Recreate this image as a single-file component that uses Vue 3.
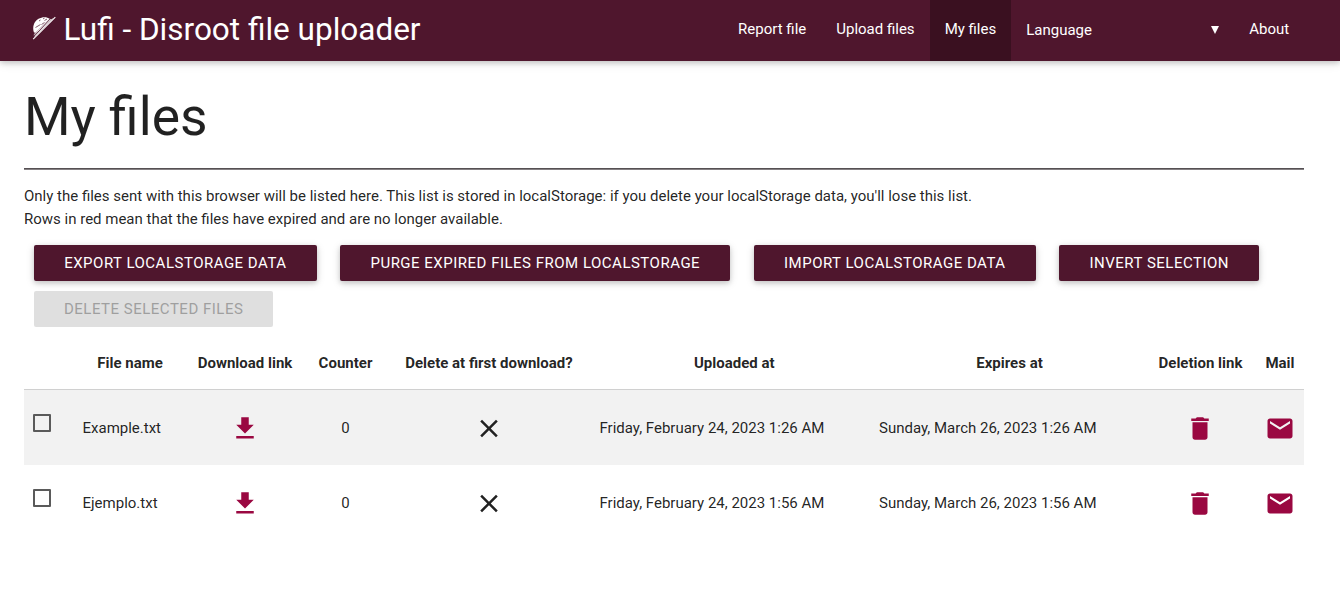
<script setup>
const links = [
  { label: 'Report file' },
  { label: 'Upload files' },
  { label: 'My files', active: true },
]
const actions = [
  'Export localStorage data',
  'Purge expired files from localStorage',
  'Import localStorage data',
  'Invert selection',
]
const files = [
  { name: 'Example.txt', counter: 0, uploaded: 'Friday, February 24, 2023 1:26 AM', expires: 'Sunday, March 26, 2023 1:26 AM' },
  { name: 'Ejemplo.txt', counter: 0, uploaded: 'Friday, February 24, 2023 1:56 AM', expires: 'Sunday, March 26, 2023 1:56 AM' },
]
</script>

<template>
  <div class="page">
    <nav class="bar">
      <a class="brand">
        <svg class="logo" width="24" height="24" viewBox="0 0 24 24">
          <path d="M2 16.500C.2 12 1.500 5.500 6.500 2.800C10.500.6 15 .8 17.800 2.800L3.500 16.800Z" fill="#fff" />
          <path d="M3.500 11.500l5-3M9.500 8.500l3-2M7 5l1.500-1M12.500 4.500l2.500-1.500M11 2.800l1.500-.5" stroke="#4f162d" stroke-width=".7" />
          <path d="M1.800 18.800L18.800 3.200" stroke="#fff" stroke-width=".9" />
          <path d="M1.200 23.200L23.300 1.200" stroke="#fff" stroke-width="1.100" />
          <path d="M2.500 20.200L20.500 2.800" stroke="#fff" stroke-width=".9" />
        </svg>
        <span>Lufi - Disroot file uploader</span>
      </a>
      <div class="menu">
        <a v-for="l in links" :key="l.label" class="item" :class="{ active: l.active }">{{ l.label }}</a>
        <div class="item language"><span>Language</span><svg width="8" height="8" viewBox="0 0 8 8"><path d="M0 0h8L4 8z" fill="#fff" /></svg></div>
        <a class="item">About</a>
      </div>
    </nav>
    <main>
      <h1>My files</h1>
      <hr>
      <p>Only the files sent with this browser will be listed here. This list is stored in localStorage: if you delete your localStorage data, you'll lose this list.<br>Rows in red mean that the files have expired and are no longer available.</p>
      <div class="actions">
        <button v-for="a in actions" :key="a" class="btn">{{ a }}</button>
        <button class="btn disabled" disabled>Delete selected files</button>
      </div>
      <table>
        <colgroup>
          <col class="c-check"><col class="c-name"><col class="c-down"><col class="c-count"><col class="c-first"><col class="c-up"><col class="c-exp"><col class="c-del"><col class="c-mail">
        </colgroup>
        <thead>
          <tr>
            <th></th><th>File name</th><th>Download link</th><th>Counter</th><th>Delete at first download?</th><th>Uploaded at</th><th>Expires at</th><th>Deletion link</th><th>Mail</th>
          </tr>
        </thead>
        <tbody>
          <tr v-for="f in files" :key="f.name">
            <td class="check"><span class="box"></span></td>
            <td>{{ f.name }}</td>
            <td class="center"><svg class="icon" viewBox="0 0 24 24"><path d="M19 9h-4V3H9v6H5l7 7 7-7zM5 18v2h14v-2H5z" /></svg></td>
            <td class="center">{{ f.counter }}</td>
            <td class="center"><svg class="icon dark" viewBox="0 0 24 24"><path d="M19 6.410L17.590 5 12 10.590 6.410 5 5 6.410 10.590 12 5 17.590 6.410 19 12 13.410 17.590 19 19 17.590 13.410 12z" /></svg></td>
            <td>{{ f.uploaded }}</td>
            <td>{{ f.expires }}</td>
            <td class="center trash"><svg class="icon" viewBox="0 0 24 24"><path d="M6 19c0 1.100.9 2 2 2h8c1.100 0 2-.9 2-2V7H6v12zM19 4h-3.500l-1-1h-5l-1 1H5v2h14V4z" /></svg></td>
            <td class="center"><svg class="icon" viewBox="0 0 24 24"><path d="M20 4H4c-1.100 0-1.990.9-1.990 2L2 18c0 1.100.9 2 2 2h16c1.100 0 2-.9 2-2V6c0-1.100-.9-2-2-2zm0 4l-8 5-8-5V6l8 5 8-5v2z" /></svg></td>
          </tr>
        </tbody>
      </table>
    </main>
  </div>
</template>

<style>
body { background: #fff; }
</style>

<style scoped>
.page {
  height: 600px;
  overflow: hidden;
  background: #fff;
  color: rgba(0, 0, 0, 0.87);
  font: 15px/22.5px Roboto, sans-serif;
}
.bar {
  display: flex;
  justify-content: space-between;
  height: 61px;
  padding: 0 35.85px 0 32px;
  box-sizing: border-box;
  background: #4f162d;
  color: #fff;
  box-shadow: 0 2px 5px 0 rgba(0, 0, 0, 0.16), 0 2px 10px 0 rgba(0, 0, 0, 0.12);
}
.brand {
  display: flex;
  gap: 7.500px;
  font-size: 31.5px;
  line-height: 60px;
  white-space: nowrap;
}
.logo { margin-top: 16px; }
.menu { display: flex; line-height: 58px; }
.item { padding: 0 15px; white-space: nowrap; }
.active { background: #3a1020; }
.language {
  display: flex;
  justify-content: space-between;
  width: 193px;
  line-height: 60px;
}
.language svg { margin-top: 26px; }
main { padding: 0 36px 0 24px; }
h1 {
  margin: 27px 0 22px;
  font-size: 53.4px;
  font-weight: 400;
  line-height: 58px;
}
hr {
  height: 2px;
  margin: 0;
  border: 0;
  background: linear-gradient(#555053 50%, #858083 50%);
}
p { margin: 15px 0 0; line-height: 22.5px; }
.actions {
  display: flex;
  flex-wrap: wrap;
  gap: 10px 23.500px;
  padding: 15px 10px 0;
}
.btn {
  height: 36px;
  padding: 0 30.2px;
  border: 0;
  border-radius: 2px;
  background: #4f162d;
  color: #fff;
  font: 15px/36px Roboto, sans-serif;
  letter-spacing: 0.5px;
  text-transform: uppercase;
  white-space: nowrap;
  box-shadow: 0 2px 5px 0 rgba(0, 0, 0, 0.16), 0 2px 10px 0 rgba(0, 0, 0, 0.12);
}
.disabled { padding: 0 30px; background: #dfdfdf; color: #9f9f9f; box-shadow: none; }
table {
  width: 1280px;
  margin-top: 10px;
  table-layout: fixed;
  border-collapse: collapse;
}
.c-check { width: 53.5px; }
.c-name { width: 105px; }
.c-down { width: 125px; }
.c-count { width: 76px; }
.c-first { width: 211px; }
.c-up { width: 279.5px; }
.c-exp { width: 271px; }
.c-del { width: 111px; }
.c-mail { width: 48px; }
thead tr { border-bottom: 1px solid #d0d0d0; }
th { height: 22.5px; padding: 15px 5px 14px; font-weight: 700; white-space: nowrap; }
td { height: 73px; padding: 2px 5px 0; white-space: nowrap; }
tbody tr:first-child { background: #f2f2f2; }
.center { text-align: center; }
.trash { padding-right: 6.500px; }
.check { padding-left: 9px; }
.box {
  display: block;
  width: 14px;
  height: 14px;
  margin-bottom: 11px;
  border: 2px solid #5a5a5a;
  border-radius: 1px;
}
.icon {
  display: block;
  width: 30px;
  height: 30px;
  margin: 1px auto 0;
  fill: #9a0841;
}
.icon path { transform: translateY(-0.4px); }
.dark { fill: #212121; }
</style>
